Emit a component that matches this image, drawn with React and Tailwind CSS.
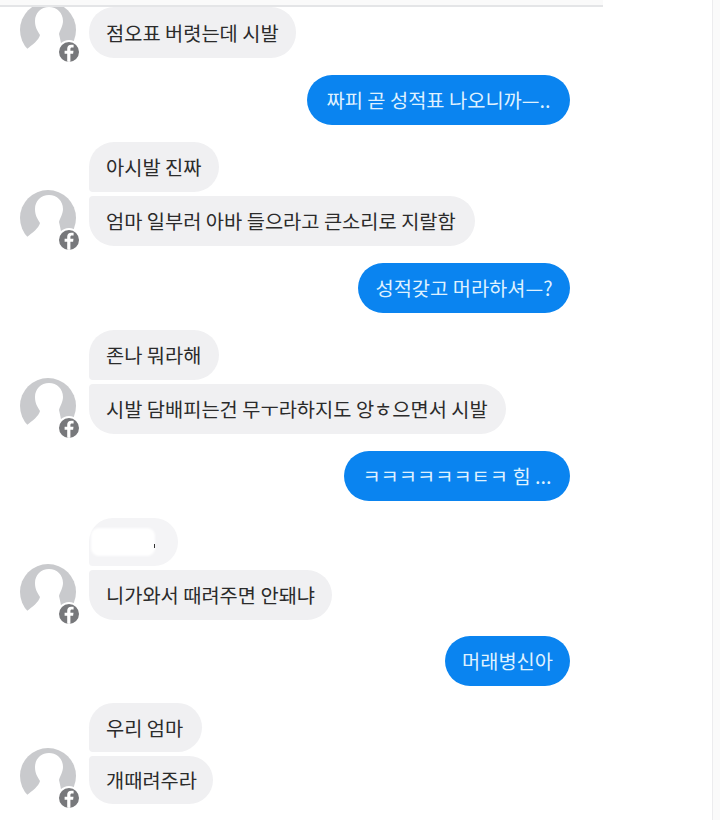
const messages = [
  {
    side: 'left',
    clipped: true,
    gap: 17,
    bubbles: [{ text: '점오표 버렷는데 시발', width: 207, height: 51 }],
  },
  { side: 'right', text: '짜피 곧 성적표 나오니까—..', width: 263 },
  {
    side: 'left',
    bubbles: [
      { text: '아시발 진짜', width: 130 },
      { text: '엄마 일부러 아바 들으라고 큰소리로 지랄함', width: 386 },
    ],
  },
  { side: 'right', text: '성적갖고 머라하셔—?', width: 212 },
  {
    side: 'left',
    bubbles: [
      { text: '존나 뭐라해', width: 130 },
      { text: '시발 담배피는건 무ㅜ라하지도 앙ㅎ으면서 시발', width: 417 },
    ],
  },
  { side: 'right', text: 'ㅋㅋㅋㅋㅋㅋㅌㅋ 힘 ...', width: 226 },
  {
    side: 'left',
    gap: 16,
    bubbles: [
      { blank: true, width: 89, height: 48 },
      { text: '니가와서 때려주면 안돼냐', width: 243 },
    ],
  },
  { side: 'right', text: '머래병신아', width: 125 },
  {
    side: 'left',
    bubbles: [
      { text: '우리 엄마', width: 113, height: 49 },
      { text: '개때려주라', width: 124, height: 48 },
    ],
  },
];

function Avatar() {
  return (
    <div className="relative h-[56px] w-[56px] shrink-0">
      <svg viewBox="0 0 56 56" className="h-[56px] w-[56px]">
        <circle cx="28" cy="28" r="28" fill="#c9cacd" />
        <path
          d="M29 5C37 5 43 11 43 19C43 24 40 28 39 32C40 36 41 41 42 47L57 57L-1 57L7 47C12 43 19 38 20 33C17 28 15 25 15 19C15 11 21 5 29 5z"
          fill="#fff"
        />
      </svg>
      <div className="absolute left-[37px] top-[38px] flex h-[24px] w-[24px] items-center justify-center overflow-hidden rounded-full border-2 border-white bg-[#77787b]">
        <svg viewBox="0 0 20 20" className="h-[20px] w-[20px]">
          <path
            d="M11.4 20v-8.2h2.7l.4-3h-3.1V7c0-.9.3-1.5 1.6-1.5h1.6V2.8c-.3 0-1.3-.1-2.4-.1-2.4 0-4 1.4-4 4.1v2H5.6v3h2.6V20z"
            fill="#fff"
          />
        </svg>
      </div>
    </div>
  );
}

function LeftGroup({ bubbles, clipped, gap }) {
  return (
    <div
      style={{ marginBottom: gap ?? 17 }}
      className={`flex items-end pl-[20px] ${clipped ? 'h-[51px]' : ''}`}
    >
      <Avatar />
      <div className="ml-[13px] flex flex-col gap-[4px]">
        {bubbles.map((b, i) => (
          <div
            key={i}
            style={{ width: b.width, height: b.height ?? 50 }}
            className={`relative flex items-center whitespace-nowrap rounded-[25px] px-[17px] text-[19.8px] text-[#2b2b2b] ${
              b.blank ? 'bg-[#f4f4f6]' : 'bg-[#f0f0f2]'
            } ${bubbles.length > 1 && i === 0 ? 'rounded-bl-[4px]' : ''} ${
              bubbles.length > 1 && i === 1 ? 'rounded-tl-[4px]' : ''
            }`}
          >
            {b.blank && (
              <>
                <div className="-ml-[15px] h-[28px] w-[64px] rounded-[8px] bg-white blur-[1px]" />
                <div className="absolute left-[65px] top-[26px] h-[4px] w-[1px] bg-[#333]" />
              </>
            )}
            {b.text}
          </div>
        ))}
      </div>
    </div>
  );
}

function RightBubble({ text, width }) {
  return (
    <div className="mb-[17px] flex justify-end pr-[142px]">
      <div
        style={{ width }}
        className="flex h-[50px] items-center justify-center whitespace-nowrap rounded-[25px] bg-[#0a84f0] text-[19.8px] text-[#dff1ff]"
      >
        {text}
      </div>
    </div>
  );
}

export default function App() {
  return (
    <div className="h-[820px] w-[720px] overflow-hidden bg-[#fafafa] font-['Noto_Sans_CJK_KR',sans-serif]">
      <div className="flex h-[820px] w-[713px] flex-col border-r border-[#ececee] bg-white">
        <div className="relative z-10 h-[7px] w-[603px] shrink-0 border-b-2 border-[#e4e5e7] bg-[#fafafa]" />
        {messages.map((m, i) =>
          m.side === 'left' ? (
            <LeftGroup key={i} bubbles={m.bubbles} clipped={m.clipped} gap={m.gap} />
          ) : (
            <RightBubble key={i} text={m.text} width={m.width} />
          )
        )}
      </div>
    </div>
  );
}
